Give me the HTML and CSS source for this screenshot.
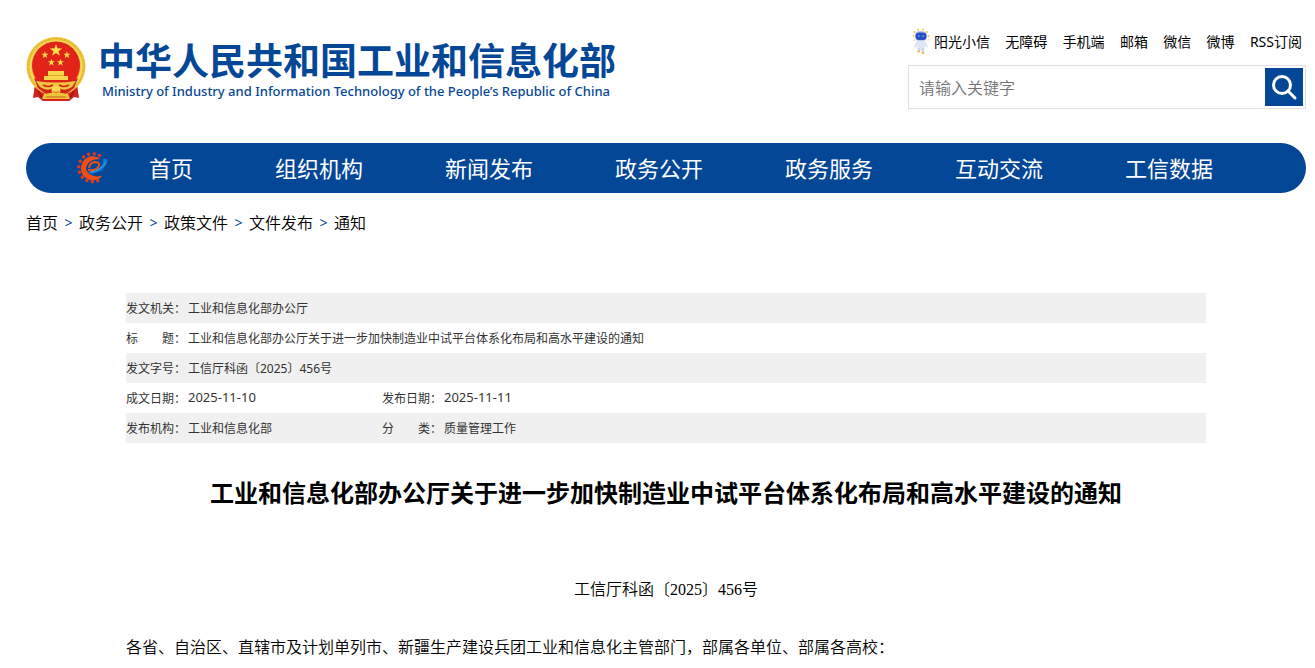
FILE: index.html
```html
<!DOCTYPE html>
<html lang="zh-CN">
<head>
<meta charset="utf-8">
<meta name="viewport" content="width=device-width, initial-scale=1">
<title>工业和信息化部办公厅关于进一步加快制造业中试平台体系化布局和高水平建设的通知</title>
<link rel="stylesheet" href="styles.css">
</head>
<body>
<div class="page">
  <header class="header">
    <a class="brand" href="#">
      <svg class="emblem" viewBox="0 0 60 66" aria-hidden="true">
        <path d="M9 48 7 62l5-1 5 4h26l5-4 5 1-2-14z" fill="#d3221a"/>
        <path d="M12 55l5 9M48 55l-5 9" stroke="#9c1812" stroke-width="1.500"/>
        <circle cx="30" cy="30.500" r="29.500" fill="#eec53a"/>
        <circle cx="30" cy="30.500" r="28" fill="none" stroke="#dba92a" stroke-dasharray="2 2"/>
        <circle cx="30" cy="30.500" r="25.500" fill="none" stroke="#f8de5c" stroke-width="1.500"/>
        <circle cx="30" cy="29.500" r="24" fill="#e2231a"/>
        <path d="M8 42q22 8 44 0l-4 10-8 6H20l-8-6z" fill="#d3221a"/>
        <path d="M22 35h16v5h4v4H18v-4h4z" fill="#f6d74b"/>
        <path d="M22 39.500h16" stroke="#dba92a"/>
        <path d="M10 45q20 3 40 0l-4 6q-6 4-11 2l-5-3-5 3q-5 2-11-2z" fill="#f0c73c"/>
        <path d="M17 49q5 3 10 0M33 49q5 3 10 0" fill="none" stroke="#d3221a" stroke-width="1.500"/>
        <circle cx="30" cy="54" r="4.500" fill="#f7d850"/>
        <path d="M18 58q12-3 24 0l2 5H16z" fill="#efc439"/>
        <path d="M27 55.500q3 2 6 0M20 61h20" fill="none" stroke="#cf5a20"/>
        <g fill="#fbe04a">
          <path id="star" d="M30 8l1.500 4.300 4.600.1-3.600 2.800 1.300 4.500-3.800-2.600-3.800 2.600 1.300-4.500-3.600-2.800 4.600-.1z"/>
          <use href="#star" transform="translate(1.500 10.500) scale(.58)"/>
          <use href="#star" transform="translate(23.500 10.500) scale(.58)"/>
          <use href="#star" transform="translate(8 18) scale(.58)"/>
          <use href="#star" transform="translate(17 18) scale(.58)"/>
        </g>
      </svg>
      <span class="brand-text">
        <span class="brand-cn">中华人民共和国工业和信息化部</span>
        <span class="brand-en" lang="en">Ministry of Industry and Information Technology of the People’s Republic of China</span>
      </span>
    </a>
    <div class="tools">
      <nav class="quick" aria-label="快捷入口">
        <a class="robot-link" href="#">
          <svg class="robot" viewBox="0 0 18 26" aria-hidden="true">
            <g fill="#f6c63c"><circle cx="6" cy="1.500" r="1"/><circle cx="11" cy="1.500" r="1"/><circle cx="2.500" cy="4" r="1"/><circle cx="15" cy="4" r="1"/><circle cx="1.500" cy="8" r=".9"/><circle cx="16.500" cy="8" r=".9"/><circle cx="2" cy="12" r=".8"/><circle cx="16" cy="12" r=".8"/></g>
            <path d="M5 12h8l3 6-1 2-2-2-1 5H6l-1-5-2 2-1-2z" fill="#dfe6f4"/>
            <path d="M6 20h2l-.5 4H6zM10 20h2v5h-2z" fill="#c9d4ec"/>
            <rect x="3" y="3" width="12" height="10" rx="4.500" fill="#b9c8ef"/>
            <rect x="3.500" y="4.500" width="11" height="7.500" rx="3.500" fill="#294fc0"/>
            <path d="M6 8h1.500M10.500 8H12" stroke="#8fd5ff"/>
            <path d="M5 23.500h3M9.500 25h3" stroke="#f1b64a" stroke-width="1.500"/>
          </svg>阳光小信</a>
        <a href="#">无障碍</a>
        <a href="#">手机端</a>
        <a href="#">邮箱</a>
        <a href="#">微信</a>
        <a href="#">微博</a>
        <a href="#">RSS订阅</a>
      </nav>
      <form class="search" role="search">
        <input class="search-input" type="text" placeholder="请输入关键字" aria-label="请输入关键字">
        <button class="search-button" type="button" aria-label="搜索">
          <svg class="search-icon" viewBox="0 0 38 38" aria-hidden="true"><circle cx="17" cy="17" r="8.500"/><path d="M23 23l7 7"/></svg>
        </button>
      </form>
    </div>
  </header>

  <nav class="main-nav" aria-label="主导航">
    <svg class="nav-logo" viewBox="0 0 34 34" aria-hidden="true">
      <path d="M24.500 4.500A14 14 0 1 0 26 28" fill="none" stroke="#d93a20" stroke-width="3.600" stroke-linecap="round" stroke-dasharray="0 5.600"/>
      <path d="M25.500 8A12 12 0 1 0 27.500 24.500Q20 27 14.500 23T12 14.500Q15 7.500 25.500 8z" fill="#f04e17"/>
      <path d="M13 19Q21 20 23.500 15.500T19.500 11Q15 11.500 14 17" fill="none" stroke="#f04e17" stroke-width="2"/>
      <path d="M12 21.500Q19 21 24.500 16.500T27.500 8.500Q33 6 32.500 10 31 17 24 20.500T12 21.500z" fill="#0879cf"/>
      <path d="M15 21.200q10-1 16-10" fill="none" stroke="#4aa5e2"/>
    </svg>
    <a href="#">首页</a>
    <a href="#">组织机构</a>
    <a href="#">新闻发布</a>
    <a href="#">政务公开</a>
    <a href="#">政务服务</a>
    <a href="#">互动交流</a>
    <a href="#">工信数据</a>
  </nav>

  <nav class="crumbs" aria-label="当前位置">
    <a href="#">首页</a><span class="sep">&gt;</span>
    <a href="#">政务公开</a><span class="sep">&gt;</span>
    <a href="#">政策文件</a><span class="sep">&gt;</span>
    <a href="#">文件发布</a><span class="sep">&gt;</span>
    <a href="#">通知</a>
  </nav>

  <main class="article">
    <table class="meta">
      <colgroup><col class="col-label"><col class="col-value"><col class="col-label"><col></colgroup>
      <tbody>
        <tr><th scope="row">发文机关：</th><td colspan="3">工业和信息化部办公厅</td></tr>
        <tr><th scope="row">标　　题：</th><td colspan="3">工业和信息化部办公厅关于进一步加快制造业中试平台体系化布局和高水平建设的通知</td></tr>
        <tr><th scope="row">发文字号：</th><td colspan="3">工信厅科函〔2025〕456号</td></tr>
        <tr><th scope="row">成文日期：</th><td class="date">2025-11-10</td><th scope="row">发布日期：</th><td class="date">2025-11-11</td></tr>
        <tr><th scope="row">发布机构：</th><td>工业和信息化部</td><th scope="row">分　　类：</th><td>质量管理工作</td></tr>
      </tbody>
    </table>
    <h1 class="title">工业和信息化部办公厅关于进一步加快制造业中试平台体系化布局和高水平建设的通知</h1>
    <div class="content">
      <p class="doc-number">工信厅科函〔2025〕456号</p>
      <p>各省、自治区、直辖市及计划单列市、新疆生产建设兵团工业和信息化主管部门，部属各单位、部属各高校：</p>
    </div>
  </main>
</div>
</body>
</html>
```

FILE: styles.css
```css
* { box-sizing: border-box; }

body {
  margin: 0;
  background: #fff;
  color: #000;
  font-family: "Noto Sans", "Noto Sans CJK SC", sans-serif;
  font-size: 16px;
}

a { color: inherit; text-decoration: none; }

.page { padding: 28px 9px 0 26px; }

.header {
  display: flex;
  justify-content: space-between;
  align-items: flex-start;
  height: 115px;
}

.brand {
  display: flex;
  align-items: flex-start;
  gap: 12px;
  padding-top: 8px;
  color: #054797;
}
.emblem { width: 60px; height: 66px; }
.brand-text { display: flex; flex-direction: column; white-space: nowrap; }
.brand-cn {
  font-family: "Noto Sans CJK SC", sans-serif;
  font-size: 37px;
  font-weight: 700;
  line-height: 46px;
}
.brand-en { padding-left: 4px; font-size: 13px; font-weight: 500; line-height: 18px; }

.tools { width: 398px; }
.quick {
  display: flex;
  justify-content: space-between;
  height: 28px;
  margin-bottom: 9px;
  padding: 0 4px;
  font-size: 14px;
  line-height: 28px;
  white-space: nowrap;
}
.robot-link { display: flex; gap: 4px; }
.robot { width: 18px; height: 26px; }

.search {
  display: flex;
  align-items: center;
  height: 44px;
  padding: 2px;
  border: 1px solid #e0e0e0;
}
.search-input {
  flex: 1;
  min-width: 0;
  height: 38px;
  padding: 2px 8px 0;
  border: 0;
  outline: 0;
  background: transparent;
  font: inherit;
  font-weight: 350;
}
.search-input::placeholder { color: #757575; opacity: 1; }
.search-button { width: 38px; height: 38px; padding: 0; border: 0; background: #054797; }
.search-icon { display: block; fill: none; stroke: #fff; stroke-width: 3; stroke-linecap: round; }

.main-nav {
  display: flex;
  align-items: center;
  gap: 82px;
  height: 50px;
  padding-left: 49px;
  border-radius: 25px;
  background: #054797;
  color: #fff;
  font-size: 22px;
  line-height: 50px;
  white-space: nowrap;
}
.nav-logo { width: 34px; height: 34px; margin-right: -42px; }

.crumbs { display: flex; padding-top: 18px; font-weight: 350; line-height: 24px; }
.sep { width: 21px; color: #054797; font-size: 14px; font-weight: 400; text-align: center; }

.article { padding: 58px 100px 0; }
.meta {
  width: 100%;
  border-collapse: collapse;
  table-layout: fixed;
  color: #333;
  font-size: 12px;
  line-height: 28px;
}
.col-label { width: 62px; }
.col-value { width: 194px; }
.meta th, .meta td { padding: 2px 0 0; font-weight: 400; text-align: left; white-space: nowrap; }
.meta .date { padding: 0 0 2px; font-size: 13px; }
.meta tr:nth-child(odd) { background: #f0f0f0; }

.title { margin: 30px 0 65px; font-size: 24px; line-height: 40px; text-align: center; }

.content {
  font-family: "Liberation Serif", "Noto Sans CJK SC", serif;
  font-weight: 350;
  line-height: 24px;
}
.content p { margin: 0 0 34px; }
.content p:last-child { margin-bottom: 0; }
.doc-number { text-align: center; }
```
